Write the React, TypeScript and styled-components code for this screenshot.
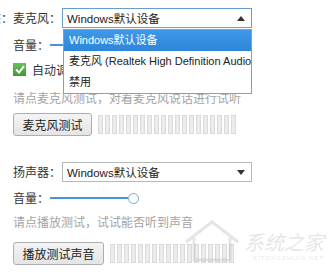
import styled, { createGlobalStyle } from "styled-components";

const GlobalStyle = createGlobalStyle`
  body {
    margin: 0;
    background: #ffffff;
    font-family: "Noto Sans CJK SC", "Noto Sans", sans-serif;
    font-size: 12px;
    color: #333333;
  }
`;

const Panel = styled.div`
  position: relative;
  width: 332px;
  height: 272px;
  overflow: hidden;
  box-sizing: border-box;
  padding: 8px 0 0 13px;
  display: flex;
  flex-direction: column;
`;

const Row = styled.div<{ $top: number }>`
  display: flex;
  align-items: center;
  height: 20px;
  margin-top: ${(p) => p.$top}px;
`;

const CutLabel = styled.span`
  width: 24px;
  margin-left: -24px;
  white-space: nowrap;
  line-height: 20px;
`;

const Label = styled.span`
  width: 49px;
  white-space: nowrap;
  line-height: 20px;
`;

const VolumeLabel = styled.span`
  width: 37px;
  white-space: nowrap;
  line-height: 20px;
`;

const SelectWrap = styled.div`
  position: relative;
`;

const Select = styled.div<{ $focused?: boolean }>`
  width: 190px;
  height: 20px;
  box-sizing: border-box;
  border: 1px solid ${(p) => (p.$focused ? "#6a9ccc" : "#b5b8bf")};
  background: #fff;
  display: flex;
  align-items: center;
  justify-content: space-between;
  padding: 0 6px 0 4px;
  font-family: "Liberation Sans", "Noto Sans CJK SC", sans-serif;
  font-size: 11.5px;
  color: #222;
`;

const Arrow = styled.span<{ $up?: boolean }>`
  width: 0;
  height: 0;
  border-left: 4px solid transparent;
  border-right: 4px solid transparent;
  ${(p) =>
    p.$up ? "border-bottom: 5px solid #333;" : "border-top: 5px solid #333;"}
`;

const Dropdown = styled.div`
  position: absolute;
  top: 21px;
  left: 1px;
  width: 189px;
  box-sizing: border-box;
  border: 1px solid #6aa6e4;
  background: #fff;
  z-index: 5;
`;

const Option = styled.div<{ $active?: boolean }>`
  height: 21px;
  line-height: 21px;
  padding-left: 5px;
  white-space: nowrap;
  overflow: hidden;
  font-family: "Liberation Sans", "Noto Sans CJK SC", sans-serif;
  font-size: 11px;
  color: ${(p) => (p.$active ? "#fff" : "#222")};
  background: ${(p) =>
    p.$active ? "linear-gradient(#3f98e8, #2c86d9)" : "transparent"};
`;

const Track = styled.div`
  display: flex;
  align-items: center;
`;

const Line = styled.div`
  width: 78px;
  height: 2px;
  background: #4a93d4;
`;

const Knob = styled.div`
  width: 9px;
  height: 9px;
  border-radius: 50%;
  border: 1px solid #8aa6c4;
  background: #fbfcfe;
`;

const CheckBox = styled.span`
  width: 13px;
  height: 13px;
  margin-right: 6px;
  background: linear-gradient(#6cc05a, #3f9a32);
  display: flex;
  align-items: center;
  justify-content: center;
`;

const Hint = styled.div<{ $top: number }>`
  margin-top: ${(p) => p.$top}px;
  line-height: 16px;
  height: 16px;
  color: #a3a3a3;
  white-space: nowrap;
`;

const TestRow = styled.div<{ $top: number }>`
  display: flex;
  align-items: center;
  gap: 4px;
  margin-top: ${(p) => p.$top}px;
`;

const Button = styled.button<{ $w: number }>`
  width: ${(p) => p.$w}px;
  height: 23px;
  padding: 0;
  border: 1px solid #adadad;
  border-radius: 3px;
  background: linear-gradient(#f4f4f4, #e4e4e4);
  font-family: "Noto Sans CJK SC", sans-serif;
  font-size: 12px;
  color: #222;
`;

const Meter = styled.div`
  display: flex;
  gap: 2px;
  margin-left: 2px;
`;

const Bar = styled.span`
  width: 3px;
  height: 17px;
  border: 1px solid #dadada;
  background: #ececec;
`;

const Watermark = styled.div`
  position: absolute;
  right: 8px;
  bottom: 10px;
  display: flex;
  align-items: flex-end;
  gap: 2px;
  color: rgba(190, 190, 190, 0.4);
  pointer-events: none;
`;

const MarkText = styled.div`
  display: flex;
  flex-direction: column;
  align-items: flex-end;
  font-size: 20px;
  line-height: 24px;
  font-style: italic;
`;

const MarkSub = styled.span`
  font-size: 6px;
  line-height: 8px;
  font-style: normal;
  letter-spacing: 1px;
  font-family: "Liberation Sans", sans-serif;
`;

function Meters({ count }: { count: number }) {
  return (
    <Meter>
      {Array.from({ length: count }).map((_, i) => (
        <Bar key={i} />
      ))}
    </Meter>
  );
}

function Slider() {
  return (
    <Track>
      <Line />
      <Knob />
    </Track>
  );
}

export default function App() {
  return (
    <>
      <GlobalStyle />
      <Panel>
        <Row $top={0}>
          <CutLabel>态：</CutLabel>
          <Label>麦克风：</Label>
          <SelectWrap>
            <Select $focused>
              <span>Windows默认设备</span>
              <Arrow $up />
            </Select>
            <Dropdown>
              <Option $active>Windows默认设备</Option>
              <Option>麦克风 (Realtek High Definition Audio</Option>
              <Option>禁用</Option>
            </Dropdown>
          </SelectWrap>
        </Row>

        <Row $top={7}>
          <VolumeLabel>音量：</VolumeLabel>
          <Slider />
        </Row>

        <Row $top={4}>
          <CheckBox>
            <svg width="10" height="9" viewBox="0 0 10 9">
              <path d="M1 4.5 L4 7.5 L9 1.2" fill="none" stroke="#fff" strokeWidth="2" />
            </svg>
          </CheckBox>
          <span>自动调节麦克风音量</span>
        </Row>

        <Hint $top={11}>请点麦克风测试，对着麦克风说话进行试听</Hint>

        <TestRow $top={7}>
          <Button $w={79}>麦克风测试</Button>
          <Meters count={20} />
        </TestRow>

        <Row $top={26}>
          <Label>扬声器：</Label>
          <Select>
            <span>Windows默认设备</span>
            <Arrow />
          </Select>
        </Row>

        <Row $top={6}>
          <VolumeLabel>音量：</VolumeLabel>
          <Slider />
        </Row>

        <Hint $top={6}>请点播放测试，试试能否听到声音</Hint>

        <TestRow $top={12}>
          <Button $w={91}>播放测试声音</Button>
          <Meters count={18} />
        </TestRow>

        <Watermark>
          <svg width="60" height="44" viewBox="0 0 60 44">
            <path
              d="M4 24 L30 4 L56 24 M12 20 L12 42 L48 42 L48 20"
              fill="none"
              stroke="rgba(190,190,190,0.4)"
              strokeWidth="3"
            />
          </svg>
          <MarkText>
            系统之家
            <MarkSub>XITONGZHIJIA.NET</MarkSub>
          </MarkText>
        </Watermark>
      </Panel>
    </>
  );
}
